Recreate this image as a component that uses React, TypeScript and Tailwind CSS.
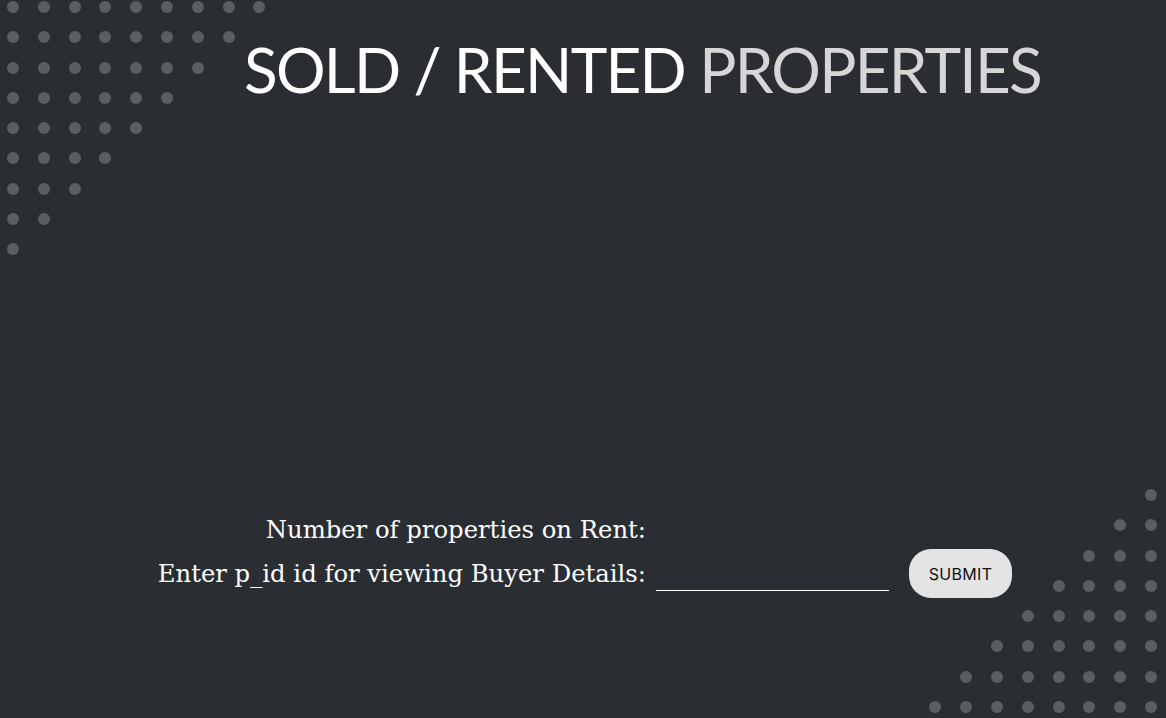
const topRows = [9, 8, 7, 6, 5, 4, 3, 2, 1];
const bottomRows = [1, 2, 3, 4, 5, 6, 7, 8];

const Dot = () => <span className="block size-[12px] rounded-full bg-[#5a5e62]" />;

const DotTriangle = ({ rows, align }: { rows: number[]; align: "start" | "end" }) => (
  <div className={`flex flex-col gap-y-[18.3px] ${align === "end" ? "items-end" : "items-start"}`}>
    {rows.map((count, i) => (
      <div key={i} className="flex gap-x-[18.8px]">
        {Array.from({ length: count }).map((_, j) => (
          <Dot key={j} />
        ))}
      </div>
    ))}
  </div>
);

export default function App() {
  return (
    <div className="relative h-[718px] w-full overflow-hidden bg-[#2a2e33]">
      {/* decorative dot patterns */}
      <div className="absolute left-[7px] top-[1px]">
        <DotTriangle rows={topRows} align="start" />
      </div>
      <div className="absolute bottom-[5px] right-[9px]">
        <DotTriangle rows={bottomRows} align="end" />
      </div>

      <div className="relative flex h-full flex-col">
        <h1
          className="pl-[244px] pt-[38px] text-[62px] leading-none tracking-[-0.028em]"
          style={{ fontFamily: "Lato, 'Open Sans', sans-serif" }}
        >
          <span className="text-white">SOLD / RENTED </span>
          <span className="text-[#d6d6d6]">PROPERTIES</span>
        </h1>

        <div
          className="mt-[414px] flex flex-col gap-y-[3px] text-[24.3px] leading-[32px] text-white"
          style={{ fontFamily: "'DejaVu Serif', serif" }}
        >
          <div className="w-[646px] text-right">Number of properties on Rent:</div>
          <div className="flex items-center">
            <span className="w-[646px] text-right">Enter p_id id for viewing Buyer Details:</span>
            <input
              type="text"
              className="ml-[10px] mt-[4px] h-[30px] w-[233px] border-b-[1.5px] border-white bg-transparent text-white outline-none"
            />
            <button
              type="button"
              className="ml-[20px] h-[49px] w-[103px] rounded-[22px] bg-[#e4e4e4] text-[16px] leading-none tracking-[0.02em] text-[#111]"
              style={{ fontFamily: "Inter, sans-serif" }}
            >
              SUBMIT
            </button>
          </div>
        </div>
      </div>
    </div>
  );
}
